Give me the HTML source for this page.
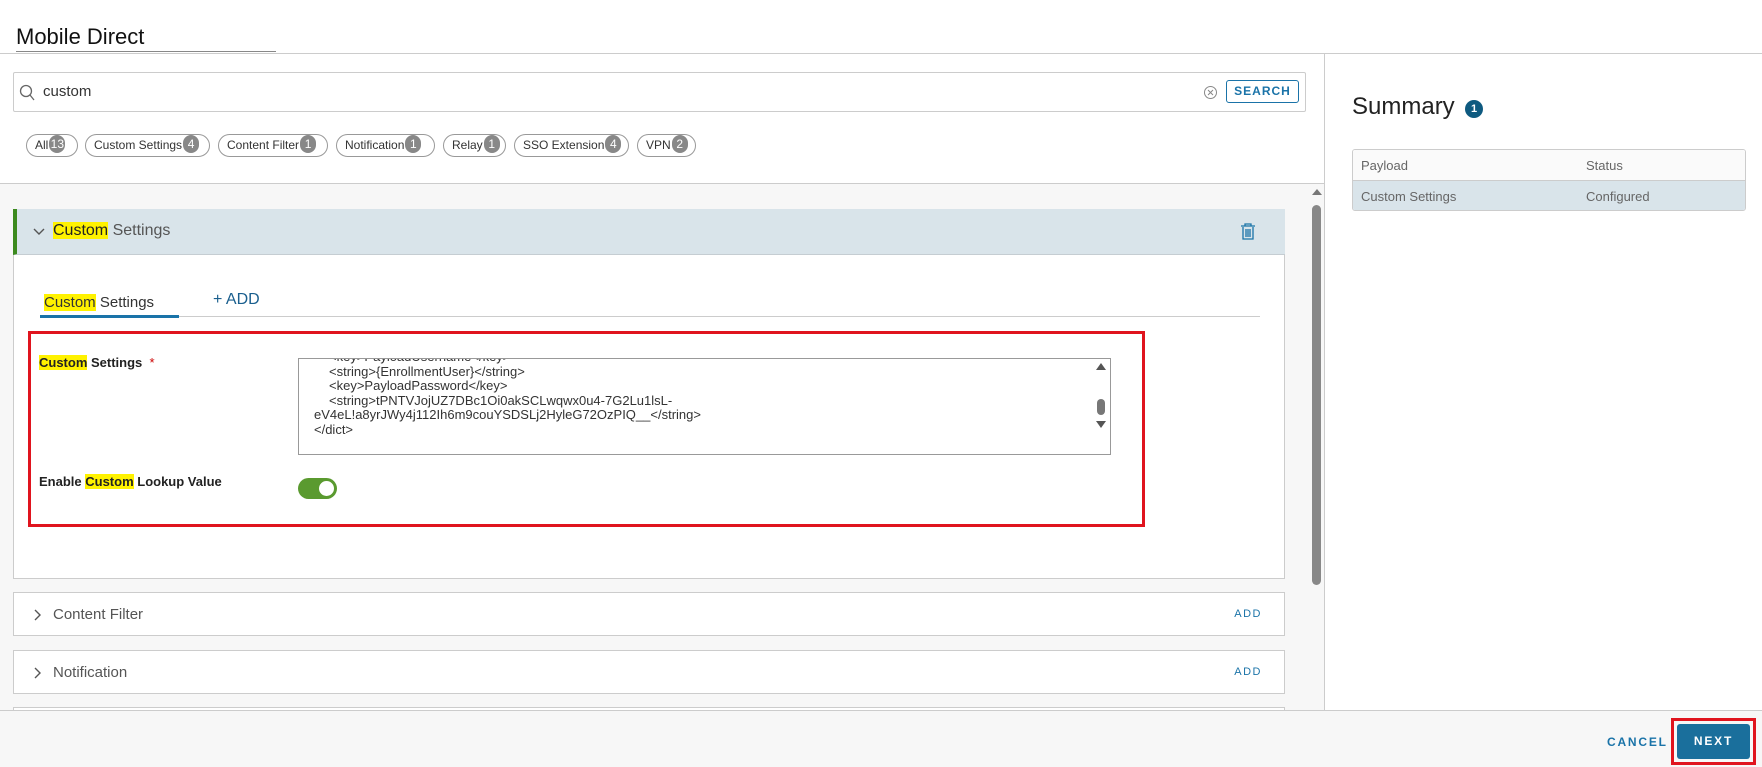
<!DOCTYPE html>
<html><head><style>
*{box-sizing:border-box;margin:0;padding:0}
body{width:1762px;height:767px;overflow:hidden;background:#fff;font-family:"Liberation Sans",sans-serif;color:#333;position:relative}
.a{position:absolute}
.hl{background:#fff200}
.chip{position:absolute;top:134px;height:23px;border:1px solid #999;border-radius:12px;font-size:12px;line-height:21px;padding-left:8px;color:#333;white-space:nowrap}
.chip b{display:inline-block;background:#888;color:#fff;border-radius:9px;min-width:16px;height:18px;line-height:18px;text-align:center;font-weight:normal;font-size:12px;margin-left:1px;vertical-align:1px}
.card{position:absolute;left:13px;width:1272px;background:#fff;border:1px solid #ccc}
.add{position:absolute;right:22px;color:#1a73a8;font-size:11px;letter-spacing:1.5px}
</style></head><body>
<div class="a" style="left:16px;top:24px;font-size:22px;color:#111">Mobile Direct</div>
<div class="a" style="left:16px;top:51px;width:260px;height:1px;background:#888"></div>
<div class="a" style="left:0;top:53px;width:1762px;height:1px;background:#ccc"></div>
<div class="a" style="left:1324px;top:53px;width:1px;height:657px;background:#ccc"></div>
<!-- search -->
<div class="a" style="left:13px;top:72px;width:1293px;height:40px;border:1px solid #ccc;border-radius:2px"></div>
<svg class="a" style="left:19px;top:84px" width="16" height="18"><circle cx="7" cy="7" r="5.5" fill="none" stroke="#666" stroke-width="1.3"/><line x1="11" y1="11" x2="15" y2="16" stroke="#666" stroke-width="1.3"/></svg>
<div class="a" style="left:43px;top:83px;font-size:15px;color:#333">custom</div>
<svg class="a" style="left:1203px;top:85px" width="15" height="15"><circle cx="7.5" cy="7.5" r="6" fill="none" stroke="#888"/><path d="M5 5l5 5M10 5l-5 5" stroke="#888"/></svg>
<div class="a" style="left:1226px;top:80px;width:73px;height:23px;border:1px solid #1a73a8;border-radius:3px;color:#1a73a8;font-size:12px;font-weight:bold;letter-spacing:1px;text-align:center;line-height:21px">SEARCH</div>
<div class="chip" style="left:26px;width:52px">All<b>13</b></div>
<div class="chip" style="left:85px;width:125px">Custom Settings<b>4</b></div>
<div class="chip" style="left:218px;width:110px">Content Filter<b>1</b></div>
<div class="chip" style="left:336px;width:99px">Notification<b>1</b></div>
<div class="chip" style="left:443px;width:63px">Relay<b>1</b></div>
<div class="chip" style="left:514px;width:115px">SSO Extension<b>4</b></div>
<div class="chip" style="left:637px;width:59px">VPN<b>2</b></div>
<div class="a" style="left:0;top:183px;width:1324px;height:1px;background:#ccc"></div>
<div class="a" style="left:0;top:184px;width:1324px;height:526px;background:#f7f7f7"></div>
<!-- main card -->
<div class="card" style="top:209px;height:370px">
 <div class="a" style="left:-1px;top:-1px;width:1272px;height:46px;background:#d9e4ea;border-left:4px solid #3c8a1e;border-bottom:1px solid #c5cdd2"></div>
 <svg class="a" style="left:19px;top:17px" width="12" height="10"><path d="M1 2l5 5 5-5" fill="none" stroke="#555" stroke-width="1.4"/></svg>
 <div class="a" style="left:39px;top:12px;font-size:16px;color:#555"><span class="hl" style="color:#222">Custom</span> Settings</div>
 <svg class="a" style="left:1226px;top:13px" width="16" height="17"><path d="M1 3h14M5 3V1h6v2M3 4v12h10V4M6 6v8M8 6v8M10 6v8" fill="none" stroke="#1a73a8" stroke-width="1.3"/></svg>
 <div class="a" style="left:30px;top:84px;font-size:15px;color:#333"><span class="hl">Custom</span> Settings</div>
 <div class="a" style="left:26px;top:106px;width:1220px;height:1px;background:#ccc"></div>
 <div class="a" style="left:26px;top:105px;width:139px;height:3px;background:#1a73a8"></div>
 <div class="a" style="left:199px;top:81px;font-size:16px;color:#1a5f8e">+ ADD</div>
 <div class="a" style="left:14px;top:121px;width:1117px;height:196px;border:3px solid #e0141e"></div>
 <div class="a" style="left:25px;top:145px;font-size:13px;font-weight:bold;color:#222"><span class="hl">Custom</span> Settings <span style="color:#c00;font-weight:normal">&nbsp;*</span></div>
 <div class="a" style="left:284px;top:148px;width:813px;height:97px;border:1px solid #999;overflow:hidden;font-size:13px;color:#333;line-height:14.5px;padding-left:15px;background:#fff">
  <div style="margin-top:-9px;padding-left:15px">&lt;key&gt;PayloadUsername&lt;/key&gt;</div>
  <div style="padding-left:15px">&lt;string&gt;{EnrollmentUser}&lt;/string&gt;</div>
  <div style="padding-left:15px">&lt;key&gt;PayloadPassword&lt;/key&gt;</div>
  <div style="padding-left:15px">&lt;string&gt;tPNTVJojUZ7DBc1Oi0akSCLwqwx0u4-7G2Lu1lsL-</div>
  <div>eV4eL!a8yrJWy4j112Ih6m9couYSDSLj2HyleG72OzPIQ__&lt;/string&gt;</div>
  <div>&lt;/dict&gt;</div>
  <div class="a" style="right:4px;top:4px;width:0;height:0;border:5px solid transparent;border-bottom:7px solid #555;border-top:0"></div>
  <div class="a" style="right:5px;top:40px;width:8px;height:16px;background:#777;border-radius:4px"></div>
  <div class="a" style="right:4px;top:62px;width:0;height:0;border:5px solid transparent;border-top:7px solid #555;border-bottom:0"></div>
 </div>
 <div class="a" style="left:25px;top:264px;font-size:13px;font-weight:bold;color:#222">Enable <span class="hl">Custom</span> Lookup Value</div>
 <div class="a" style="left:284px;top:268px;width:39px;height:21px;border-radius:11px;background:#5a9a2f"><div class="a" style="right:3px;top:3px;width:15px;height:15px;border-radius:50%;background:#fff"></div></div>
</div>
<div class="card" style="top:592px;height:44px">
 <svg class="a" style="left:19px;top:16px" width="10" height="12"><path d="M2 1l5 5-5 5" fill="none" stroke="#555" stroke-width="1.4"/></svg>
 <div class="a" style="left:39px;top:13px;font-size:15px;color:#555">Content Filter</div>
 <div class="add" style="top:15px">ADD</div>
</div>
<div class="card" style="top:650px;height:44px">
 <svg class="a" style="left:19px;top:16px" width="10" height="12"><path d="M2 1l5 5-5 5" fill="none" stroke="#555" stroke-width="1.4"/></svg>
 <div class="a" style="left:39px;top:13px;font-size:15px;color:#555">Notification</div>
 <div class="add" style="top:15px">ADD</div>
</div>
<div class="card" style="top:707px;height:20px"></div>
<!-- scrollbar -->
<div class="a" style="left:1312px;top:189px;width:0;height:0;border:5px solid transparent;border-bottom:6px solid #777;border-top:0"></div>
<div class="a" style="left:1312px;top:205px;width:9px;height:380px;border-radius:5px;background:#888"></div>
<!-- summary -->
<div class="a" style="left:1352px;top:93px;font-size:24px;color:#222">Summary</div>
<div class="a" style="left:1465px;top:100px;width:18px;height:18px;border-radius:50%;background:#0e5a80;color:#fff;font-size:11px;font-weight:bold;text-align:center;line-height:18px">1</div>
<div class="a" style="left:1352px;top:149px;width:394px;height:62px;border:1px solid #ccc;border-radius:3px;overflow:hidden;font-size:13px;color:#666">
 <div style="height:31px;background:#fafafa;border-bottom:1px solid #ccc;position:relative"><span class="a" style="left:8px;top:8px">Payload</span><span class="a" style="left:233px;top:8px">Status</span></div>
 <div style="height:30px;background:#d9e4ea;position:relative"><span class="a" style="left:8px;top:8px">Custom Settings</span><span class="a" style="left:233px;top:8px">Configured</span></div>
</div>
<!-- footer -->
<div class="a" style="left:0;top:710px;width:1762px;height:57px;background:#f7f7f7;border-top:1px solid #ccc"></div>
<div class="a" style="left:1607px;top:735px;font-size:12px;font-weight:bold;color:#1a73a8;letter-spacing:1.8px">CANCEL</div>
<div class="a" style="left:1671px;top:718px;width:85px;height:47px;border:3px solid #e0141e"></div>
<div class="a" style="left:1677px;top:724px;width:73px;height:35px;background:#1a6f9c;border-radius:3px;color:#fff;font-size:12px;font-weight:bold;letter-spacing:1.8px;text-align:center;line-height:35px">NEXT</div>
</body></html>
